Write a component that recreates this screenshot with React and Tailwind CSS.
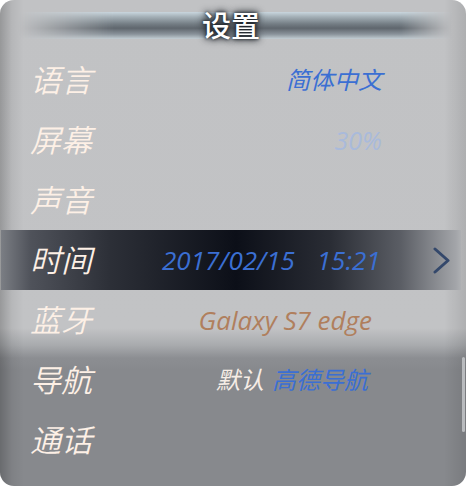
import React from 'react';

const rows = [
  { label: '语言', value: <span className="text-[#3b6fd3] text-[24px]">简体中文</span>, pad: 'pr-[84px]' },
  { label: '屏幕', value: <span className="text-[#a9badb] text-[25px]">30%</span>, pad: 'pr-[84px]' },
  { label: '声音', value: null, pad: '' },
  { label: '时间', active: true },
  { label: '蓝牙', value: <span className="text-[#b07f5d] text-[26px]">Galaxy S7 edge</span>, pad: 'pr-[94px]' },
  {
    label: '导航',
    value: (
      <span className="text-[24px]">
        <span className="text-[#f6ede6]">默认</span>
        <span className="text-[#3b6fd3] ml-[8px]">高德导航</span>
      </span>
    ),
    pad: 'pr-[98px]',
  },
  { label: '通话', value: null, pad: '' },
];

const Chevron = () => (
  <svg width="22" height="30" viewBox="0 0 22 30" className="blur-[0.6px]">
    <path d="M4 3 L17 14.5 L4 26" fill="none" stroke="#34486b" strokeWidth="3" strokeLinecap="round" strokeLinejoin="round" />
  </svg>
);

const Row = ({ row }) => {
  if (row.active) {
    return (
      <div className="h-[60px] ml-[1px] mr-[5px] flex items-center bg-[linear-gradient(to_right,#7b7e84_0px,#4f525a_30px,#2c2f37_110px,#0c0f18_235px,#2a2d35_330px,#5b5e65_400px,#a3a5a9_455px,#aeb0b3_460px)]">
        <span className="pl-[29px] text-[31px] font-[350] italic text-[#fdf0e6] leading-none w-[161px]">时间</span>
        <span className="text-[26px] italic text-[#3b6fd3] leading-none">2017/02/15</span>
        <span className="text-[26px] italic text-[#3b6fd3] leading-none ml-[22px]">15:21</span>
        <span className="ml-[50px] mt-[2px]"><Chevron /></span>
      </div>
    );
  }
  return (
    <div className={`h-[60px] flex items-center justify-between pl-[30px] ${row.pad}`}>
      <span className="text-[31px] font-[350] italic text-[#fdf0e6] leading-none">{row.label}</span>
      {row.value && <span className="italic leading-none">{row.value}</span>}
    </div>
  );
};

export default function App() {
  return (
    <div className="w-[466px] h-[486px] bg-white font-['Open_Sans','Noto_Sans_CJK_SC',sans-serif]">
      <div className="relative w-full h-full rounded-[14px] overflow-hidden bg-[linear-gradient(to_bottom,#c1c2c4_0px,#c2c3c5_328px,#a9abae_345px,#8c8e92_358px,#87898d_370px,#87898d_100%)]">
        <div className="absolute inset-0 pointer-events-none bg-[linear-gradient(to_right,rgba(0,0,0,0.22)_0px,rgba(0,0,0,0.06)_12px,rgba(0,0,0,0)_24px,rgba(0,0,0,0)_calc(100%_-_22px),rgba(0,0,0,0.1)_100%)]" />
        <div className="absolute right-[1px] top-[357px] w-[3px] h-[75px] bg-[#b9bbbe] rounded-sm" />

        <div className="relative h-[50px] flex items-center justify-center">
          <div className="absolute left-[18px] right-[14px] top-[12px] h-[27px] bg-[linear-gradient(to_bottom,#c9d6de_0%,#a3afb6_18%,#737c83_45%,#5f666d_60%,#89929a_82%,#c3ced4_100%)] [mask-image:linear-gradient(to_right,transparent_0%,black_22%,black_88%,transparent_100%)]" />
          <span className="relative text-[29px] font-medium text-white leading-none mt-[1px] mr-[4px] [text-shadow:0_0_3px_#1a1f26,0_0_6px_#1a1f26,0_0_8px_rgba(20,25,30,0.8)]">
            设置
          </span>
        </div>

        <div className="relative flex flex-col">
          {rows.map((row) => (
            <Row key={row.label} row={row} />
          ))}
        </div>
      </div>
    </div>
  );
}
